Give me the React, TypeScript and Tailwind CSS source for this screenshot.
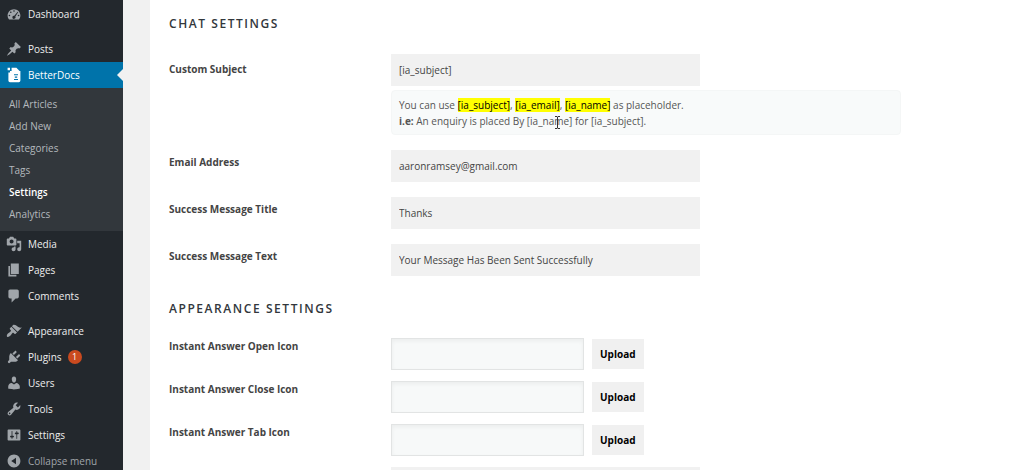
import { useState } from "react";
import type { ReactNode } from "react";

type MenuItem = { label: string; icon: string; count?: number };

const ICONS: Record<string, string> = {
  dashboard:
    "M3.76 17h12.48c1.1-1.38 1.76-3.11 1.76-5 0-4.42-3.58-8-8-8s-8 3.58-8 8c0 1.89.66 3.62 1.76 5zM10 5.2a1 1 0 1 1 0 2 1 1 0 0 1 0-2zM6 6.8a1 1 0 1 1 0 2 1 1 0 0 1 0-2zM14.6 7.2l.6.5-3.5 5.5a2 2 0 1 1-1.3-1zM4.3 10.8a1 1 0 1 1 0 2 1 1 0 0 1 0-2zM15.7 10.8a1 1 0 1 1 0 2 1 1 0 0 1 0-2z",
  posts:
    "M10.44 3.02l1.82-1.82 6.36 6.35-1.83 1.82c-1.05-.68-2.48-.57-3.41.36l-.75.75c-.92.93-1.04 2.35-.35 3.41l-1.83 1.82-2.41-2.41-2.8 2.79c-.42.42-3.38 2.71-3.8 2.29s1.86-3.39 2.28-3.81l2.79-2.79L4.1 9.36l1.83-1.82c1.05.69 2.48.57 3.4-.36l.75-.75c.93-.92 1.05-2.35.36-3.41z",
  docs:
    "M7 1h6l4 4h1v12c0 1.1-.9 2-2 2H5c-1.1 0-2-.9-2-2V7h2V5h2zM2 1h3v3H2zM10 9v1.4h5V9zM11 12v1.4h3V12zM10 15v1.4h5V15z",
  media:
    "M13 11V4c0-.55-.45-1-1-1h-1.67L9 1H5L3.67 3H2c-.55 0-1 .45-1 1v7c0 .55.45 1 1 1h10c.55 0 1-.45 1-1zM7 4.5c1.38 0 2.5 1.12 2.5 2.5S8.38 9.5 7 9.5 4.5 8.38 4.5 7 5.62 4.5 7 4.5zM14 6h5v10.5c0 1.38-1.12 2.5-2.5 2.5S14 17.88 14 16.5s1.12-2.5 2.5-2.5c.17 0 .34.02.5.05V9h-3V6zm-4 8.05V13h2v3.5c0 1.38-1.12 2.5-2.5 2.5S7 17.88 7 16.5 8.12 14 9.5 14c.17 0 .34.02.5.05z",
  pages: "M6 15V2h10v13H6zm-1 1h8v2H3V5h2v11z",
  comments:
    "M5 2h9c1.1 0 2 .9 2 2v7c0 1.1-.9 2-2 2h-2l-5 5v-5H5c-1.1 0-2-.9-2-2V4c0-1.1.9-2 2-2z",
  appearance:
    "M14.48 11.06L7.41 3.99l1.5-1.5c.5-.56 2.3-.47 3.51.32 1.21.8 1.43 1.28 2.91 2.1 1.18.64 2.45 1.26 4.45.85zm-.71.71L6.7 4.7 4.93 6.47c-.39.39-.39 1.02 0 1.41l1.06 1.06c.39.39.39 1.03 0 1.42-.6.6-1.43 1.11-2.21 1.69-.35.26-.7.53-1.01.84C1.43 14.23.4 16.08 1.4 17.07c.99 1 2.84-.03 4.18-1.36.31-.31.58-.66.85-1.02.57-.78 1.08-1.61 1.69-2.21.39-.39 1.02-.39 1.41 0l1.06 1.06c.39.39 1.02.39 1.41 0z",
  plugins:
    "M13.11 4.36L9.87 7.6 8 5.73l3.24-3.24c.35-.34 1.05-.2 1.56.32.52.51.66 1.21.31 1.55zm-8 1.77l.91-1.12 9.01 9.01-1.19.84c-.71.71-2.63 1.16-3.82 1.16H6.14L4.9 17.26c-.59.59-1.54.59-2.12 0-.59-.58-.59-1.53 0-2.12l1.24-1.24v-3.88c0-1.13.4-3.19 1.09-3.89zm7.26 3.97l3.24-3.24c.34-.35 1.04-.21 1.55.31.52.51.66 1.21.31 1.55l-3.24 3.25z",
  users:
    "M10 9.25c-2.27 0-2.73-3.44-2.73-3.44C7 4.02 7.82 2 9.97 2c2.16 0 2.98 2.02 2.71 3.81 0 0-.41 3.44-2.68 3.44zm0 2.57L12.72 10c2.39 0 4.52 2.33 4.52 4.53v2.49s-3.65 1.13-7.24 1.13c-3.65 0-7.24-1.13-7.24-1.13v-2.49c0-2.25 1.94-4.48 4.47-4.48z",
  tools:
    "M16.68 9.77c-1.34 1.34-3.3 1.67-4.95.99l-5.41 6.52c-.99.99-2.59.99-3.58 0s-.99-2.59 0-3.57l6.52-5.42c-.68-1.65-.35-3.61.99-4.95 1.28-1.28 3.12-1.62 4.72-1.06l-2.89 2.89 2.82 2.82 2.86-2.87c.53 1.58.18 3.39-1.08 4.65zM3.81 16.21c.4.39 1.04.39 1.43 0 .4-.4.4-1.04 0-1.43-.39-.4-1.03-.4-1.43 0-.39.39-.39 1.03 0 1.43z",
  settings:
    "M18 16V4c0-.55-.45-1-1-1H3c-.55 0-1 .45-1 1v12c0 .55.45 1 1 1h14c.55 0 1-.45 1-1zM8 11h1c.55 0 1 .45 1 1s-.45 1-1 1H8v1.5c0 .28-.22.5-.5.5s-.5-.22-.5-.5V13H6c-.55 0-1-.45-1-1s.45-1 1-1h1V5.5c0-.28.22-.5.5-.5s.5.22.5.5V11zm5-2h-1c-.55 0-1-.45-1-1s.45-1 1-1h1V5.5c0-.28.22-.5.5-.5s.5.22.5.5V7h1c.55 0 1 .45 1 1s-.45 1-1 1h-1v5.5c0 .28-.22.5-.5.5s-.5-.22-.5-.5V9z",
  collapse: "M10 2c4.42 0 8 3.58 8 8s-3.58 8-8 8-8-3.58-8-8 3.58-8 8-8zM12.5 6L6.5 10l6 4z",
};

const SUBMENU = ["All Articles", "Add New", "Categories", "Tags", "Settings", "Analytics"];

const CONTENT_MENU: MenuItem[] = [
  { label: "Media", icon: "media" },
  { label: "Pages", icon: "pages" },
  { label: "Comments", icon: "comments" },
];

const ADMIN_MENU: MenuItem[] = [
  { label: "Appearance", icon: "appearance" },
  { label: "Plugins", icon: "plugins", count: 1 },
  { label: "Users", icon: "users" },
  { label: "Tools", icon: "tools" },
  { label: "Settings", icon: "settings" },
];

function Icon({ name }: { name: string }) {
  return (
    <svg viewBox="0 0 20 20" className="size-4 shrink-0" fill="currentColor" fillRule="evenodd" aria-hidden="true">
      <path d={ICONS[name]} />
    </svg>
  );
}

function MenuLink({ label, icon, count }: MenuItem) {
  return (
    <a href="#" className="flex h-[26px] items-center gap-1.5 pl-1.5 text-[#a0a5aa] hover:text-[#00b9eb]">
      <Icon name={icon} />
      <span className="text-[#eeeeee]">{label}</span>
      {count && (
        <span className="flex size-3.5 items-center justify-center rounded-full bg-[#ca4a1f] text-[9px] text-white">
          {count}
        </span>
      )}
    </a>
  );
}

function Sidebar() {
  return (
    <nav className="w-[123px] shrink-0 bg-[#23282d] pt-px text-[10px]">
      <MenuLink label="Dashboard" icon="dashboard" />
      <div className="h-[9px]" />
      <MenuLink label="Posts" icon="posts" />

      <a href="#" className="relative flex h-[26px] items-center gap-1.5 bg-[#0073aa] pl-1.5 text-white">
        <Icon name="docs" />
        BetterDocs
        <span className="absolute top-[7px] right-0 border-y-6 border-r-6 border-y-transparent border-r-[#f1f1f1]" />
      </a>
      <ul className="bg-[#32373c] pt-[5px] pb-1.5">
        {SUBMENU.map((item) => (
          <li key={item}>
            <a
              href="#"
              className={`flex h-[22px] items-center pl-[9px] ${
                item === "Settings" ? "font-semibold text-white" : "text-[#b4b9be]"
              }`}
            >
              {item}
            </a>
          </li>
        ))}
      </ul>

      {CONTENT_MENU.map((item) => <MenuLink key={item.label} {...item} />)}
      <div className="h-[9px]" />
      {ADMIN_MENU.map((item) => <MenuLink key={item.label} {...item} />)}
      <button className="flex h-[26px] items-center gap-1.5 pl-1.5 text-[#a0a5aa]">
        <Icon name="collapse" />
        Collapse menu
      </button>
    </nav>
  );
}

type RowProps = { id: string; label: string; labelClass?: string; children: ReactNode };

function Row({ id, label, labelClass = "pt-1", children }: RowProps) {
  return (
    <div className="flex items-start">
      <label htmlFor={id} className={`w-[222px] shrink-0 text-[10px] leading-4 font-bold text-[#444444] ${labelClass}`}>
        {label}
      </label>
      <div className="min-w-0 flex-1">{children}</div>
    </div>
  );
}

function TextField({ id, value }: { id: string; value: string }) {
  const [text, setText] = useState(value);
  return (
    <input
      id={id}
      value={text}
      onChange={(e) => setText(e.target.value)}
      className="block h-8 w-full max-w-[309px] bg-[#f1f1f1] px-2 text-[10px] text-[#444444]"
    />
  );
}

function UploadField({ id }: { id: string }) {
  return (
    <div className="flex items-center gap-2">
      <input id={id} className="h-8 w-[193px] border border-[#e2e4e4] bg-[#f7f9f9] px-2 text-[10px] shadow-inner" />
      <button className="h-[30px] bg-[#f0f0f0] px-2 text-[10px] font-bold text-black">Upload</button>
    </div>
  );
}

function Mark({ children }: { children: ReactNode }) {
  return <mark className="bg-[#ffff00] text-black">{children}</mark>;
}

function SectionTitle({ children }: { children: ReactNode }) {
  return <h2 className="text-[12px] leading-4 font-semibold tracking-[0.13em] text-[#32373c] uppercase">{children}</h2>;
}

export default function App() {
  return (
    <div className="flex h-screen overflow-hidden bg-[#f1f1f1] font-['Open_Sans','Noto_Sans',sans-serif]">
      <Sidebar />
      <main className="ml-[27px] flex-1 bg-white pt-4 pl-[19px]">
        <SectionTitle>Chat Settings</SectionTitle>
        <div className="mt-[22px] flex flex-col gap-[15px]">
          <Row id="subject" label="Custom Subject" labelClass="pt-[7px]">
            <TextField id="subject" value="[ia_subject]" />
            <div className="relative mt-1 max-w-[510px] rounded-sm border border-[#f4f6f6] bg-[#f8fafa] px-[7px] pt-1.5 pb-[5px] text-[10px] leading-4 text-[#555555]">
              <p>
                You can use <Mark>[ia_subject]</Mark>, <Mark>[ia_email]</Mark>, <Mark>[ia_name]</Mark> as placeholder.
              </p>
              <p>
                <strong>i.e:</strong> An enquiry is placed By [ia_name] for [ia_subject].
              </p>
              {/* text cursor */}
              <svg viewBox="0 0 7 13" className="absolute top-[25px] left-[162px] h-[13px] w-[7px]" fill="none" stroke="#333333">
                <path d="M1 .5h2l.5.5.5-.5h2M3.5 1v11M1 12.5h2l.5-.5.5.5h2" />
              </svg>
            </div>
          </Row>
          <Row id="email" label="Email Address">
            <TextField id="email" value="aaronramsey@gmail.com" />
          </Row>
          <Row id="success-title" label="Success Message Title">
            <TextField id="success-title" value="Thanks" />
          </Row>
          <Row id="success-text" label="Success Message Text">
            <TextField id="success-text" value="Your Message Has Been Sent Successfully" />
          </Row>
        </div>

        <div className="mt-[25px]">
          <SectionTitle>Appearance Settings</SectionTitle>
        </div>
        <div className="mt-[21px] flex flex-col gap-[11px]">
          <Row id="open-icon" label="Instant Answer Open Icon" labelClass="pt-0">
            <UploadField id="open-icon" />
          </Row>
          <Row id="close-icon" label="Instant Answer Close Icon" labelClass="pt-0">
            <UploadField id="close-icon" />
          </Row>
          <Row id="tab-icon" label="Instant Answer Tab Icon" labelClass="pt-0">
            <UploadField id="tab-icon" />
          </Row>
          <div className="ml-[222px]">
            <TextField id="tab-title" value="" />
          </div>
        </div>
      </main>
    </div>
  );
}
